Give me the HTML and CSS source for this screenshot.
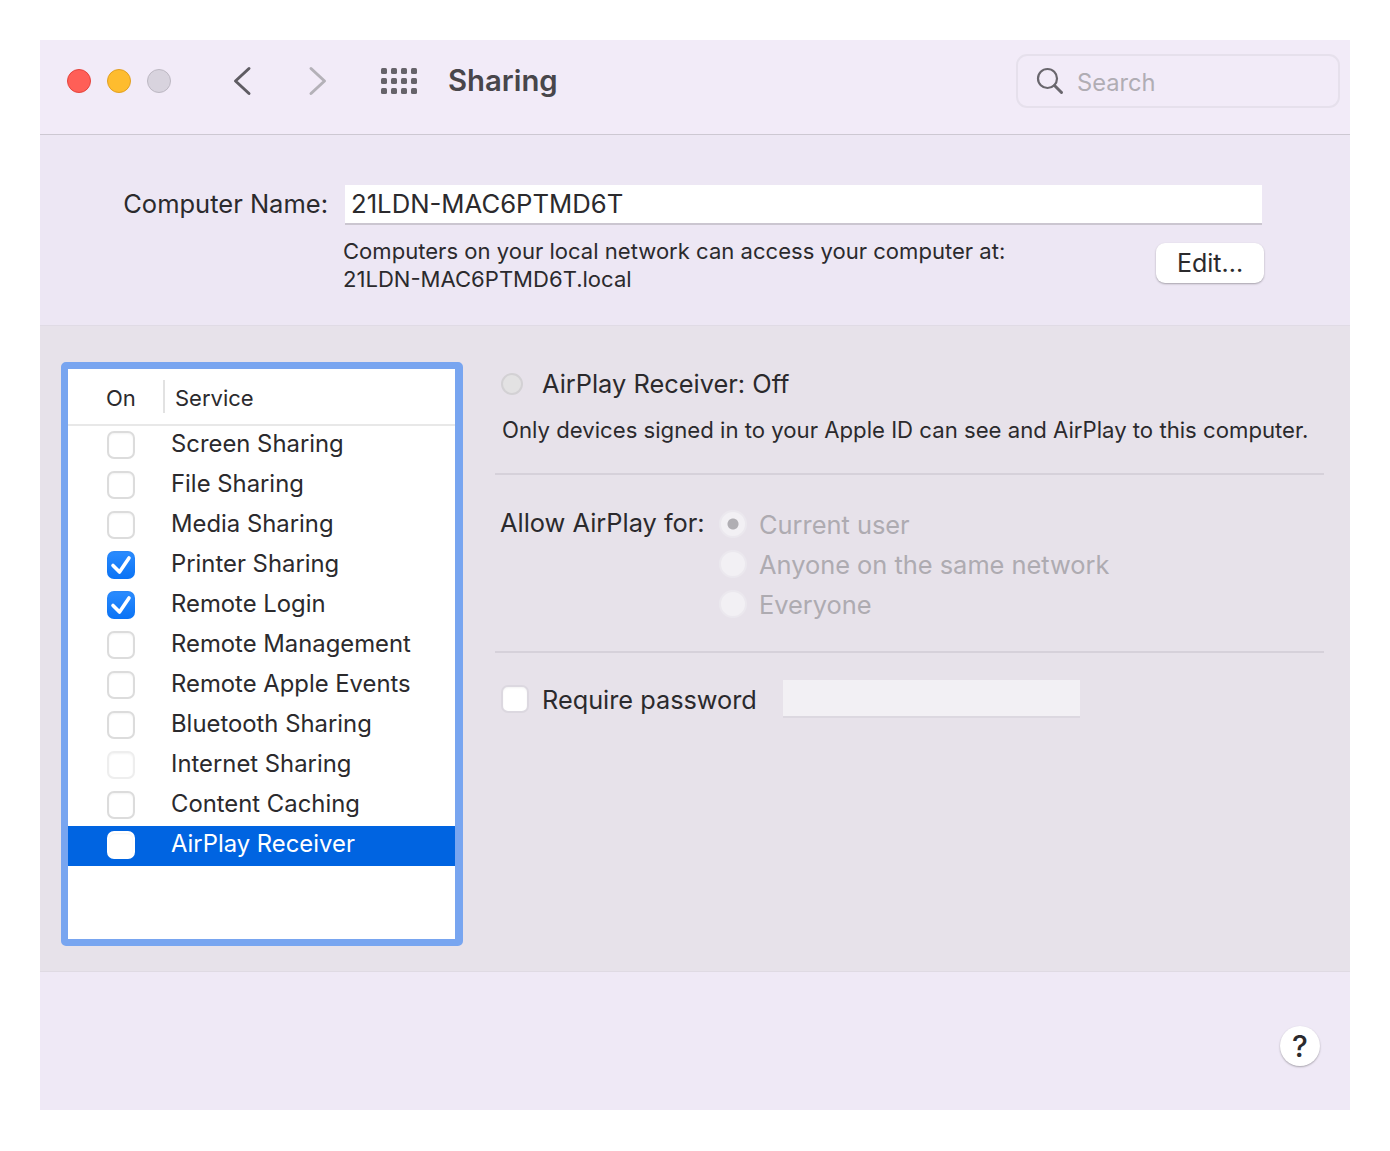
FILE: index.html

```html
<!DOCTYPE html>
<html lang="en">

<head>
    <meta charset="UTF-8">
    <meta name="viewport" content="width=device-width, initial-scale=1.0">
    <title>Sharing</title>
    <link rel="stylesheet" href="styles.css">
</head>

<body>
    <div class="window">
        <header class="toolbar">
            <div class="lights">
                <span class="light light-red"></span>
                <span class="light light-yellow"></span>
                <span class="light light-grey"></span>
            </div>
            <svg class="nav nav-back" width="20" height="30" viewBox="0 0 20 30">
                <path d="M17 2.5 L3.5 15 L17 27.5" fill="none" stroke="#5f5c63" stroke-width="3" stroke-linecap="round" stroke-linejoin="round" />
            </svg>
            <svg class="nav nav-forward" width="20" height="30" viewBox="0 0 20 30">
                <path d="M3 2.5 L16.5 15 L3 27.5" fill="none" stroke="#b4b1b8" stroke-width="3" stroke-linecap="round" stroke-linejoin="round" />
            </svg>
            <svg class="apps" width="38" height="26" viewBox="0 0 38 26" fill="#66636a">
                <rect x="0" y="0" width="6" height="6" rx="1.5" />
                <rect x="10" y="0" width="6" height="6" rx="1.5" />
                <rect x="20" y="0" width="6" height="6" rx="1.5" />
                <rect x="30" y="0" width="6" height="6" rx="1.5" />
                <rect x="0" y="10" width="6" height="6" rx="1.5" />
                <rect x="10" y="10" width="6" height="6" rx="1.5" />
                <rect x="20" y="10" width="6" height="6" rx="1.5" />
                <rect x="30" y="10" width="6" height="6" rx="1.5" />
                <rect x="0" y="20" width="6" height="6" rx="1.5" />
                <rect x="10" y="20" width="6" height="6" rx="1.5" />
                <rect x="20" y="20" width="6" height="6" rx="1.5" />
                <rect x="30" y="20" width="6" height="6" rx="1.5" />
            </svg>
            <h1 class="title">Sharing</h1>
            <div class="search">
                <svg width="28" height="28" viewBox="0 0 28 28">
                    <circle cx="11.5" cy="11.5" r="9.5" fill="none" stroke="#69666d" stroke-width="2.2" />
                    <path d="M18.5 18.5 L25.5 25.5" stroke="#69666d" stroke-width="3" stroke-linecap="round" />
                </svg>
                <span class="search-text">Search</span>
            </div>
        </header>

        <section class="name-section">
            <div class="name-row">
                <label class="name-label">Computer Name:</label>
                <div class="name-field">21LDN-MAC6PTMD6T</div>
            </div>
            <div class="address-row">
                <p class="address">Computers on your local network can access your computer at:<br>21LDN-MAC6PTMD6T.local</p>
                <button class="edit-btn">Edit...</button>
            </div>
        </section>

        <section class="main">
            <div class="list">
                <div class="list-head">
                    <span class="head-on">On</span>
                    <span class="head-service">Service</span>
                </div>
                <div class="row"><span class="box"></span><span class="row-name">Screen Sharing</span></div>
                <div class="row"><span class="box"></span><span class="row-name">File Sharing</span></div>
                <div class="row"><span class="box"></span><span class="row-name">Media Sharing</span></div>
                <div class="row">
                    <span class="box box-on">
                        <svg width="28" height="28" viewBox="0 0 28 28"><path d="M6 14.5 L12.5 21 L22 7" fill="none" stroke="#fff" stroke-width="3.6" stroke-linecap="round" stroke-linejoin="round" /></svg>
                    </span>
                    <span class="row-name">Printer Sharing</span>
                </div>
                <div class="row">
                    <span class="box box-on">
                        <svg width="28" height="28" viewBox="0 0 28 28"><path d="M6 14.5 L12.5 21 L22 7" fill="none" stroke="#fff" stroke-width="3.6" stroke-linecap="round" stroke-linejoin="round" /></svg>
                    </span>
                    <span class="row-name">Remote Login</span>
                </div>
                <div class="row"><span class="box"></span><span class="row-name">Remote Management</span></div>
                <div class="row"><span class="box"></span><span class="row-name">Remote Apple Events</span></div>
                <div class="row"><span class="box"></span><span class="row-name">Bluetooth Sharing</span></div>
                <div class="row"><span class="box box-faint"></span><span class="row-name">Internet Sharing</span></div>
                <div class="row"><span class="box"></span><span class="row-name">Content Caching</span></div>
                <div class="row row-selected"><span class="box box-white"></span><span class="row-name">AirPlay Receiver</span></div>
            </div>

            <div class="pane">
                <div class="status">
                    <span class="status-dot"></span>
                    <span class="status-text">AirPlay Receiver: Off</span>
                </div>
                <p class="desc">Only devices signed in to your Apple ID can see and AirPlay to this computer.</p>

                <div class="allow">
                    <span class="allow-label">Allow AirPlay for:</span>
                    <div class="radios">
                        <div class="radio-row"><span class="radio radio-on"></span><span>Current user</span></div>
                        <div class="radio-row"><span class="radio"></span><span>Anyone on the same network</span></div>
                        <div class="radio-row"><span class="radio"></span><span>Everyone</span></div>
                    </div>
                </div>

                <div class="password">
                    <span class="box box-white box-pass"></span>
                    <span class="password-label">Require password</span>
                    <div class="password-field"></div>
                </div>
            </div>
        </section>

        <footer class="bottom">
            <button class="help">?</button>
        </footer>
    </div>
</body>

</html>
```

FILE: styles.css

```css
body {
    margin: 0;
    background-color: #fff;
    font-family: Inter, "Liberation Sans", sans-serif;
    color: #2b2a2d;
}

.window {
    width: 1310px;
    height: 1070px;
    margin: 40px;
    display: flex;
    flex-direction: column;
    background-color: #efe9f6;
}

/* toolbar */
.toolbar {
    height: 82px;
    flex: none;
    display: flex;
    align-items: center;
    padding: 0 10px 12px 27px;
    background-color: #f2ebf8;
    border-bottom: 1px solid #cdc8d2;
}

.lights {
    display: flex;
    gap: 16px;
    width: 165px;
    flex: none;
}

.light {
    width: 22px;
    height: 22px;
    border-radius: 50%;
    border: 1px solid;
}

.light-red {
    background-color: #ff5f57;
    border-color: #e5443d;
}

.light-yellow {
    background-color: #febc2e;
    border-color: #e2a021;
}

.light-grey {
    background-color: #d8d3de;
    border-color: #bdb8c3;
}

.nav {
    flex: none;
    margin-right: 56px;
}

.nav-forward {
    margin-right: 53px;
}

.apps {
    flex: none;
    margin-right: 29px;
}

.title {
    margin: 0 0 2px;
    font-size: 29.3px;
    font-weight: 600;
    color: #48464b;
}

.search {
    width: 324px;
    height: 54px;
    margin-left: auto;
    display: flex;
    align-items: center;
    gap: 13px;
    padding-left: 18px;
    box-sizing: border-box;
    border: 2px solid #e6e0ec;
    border-radius: 11px;
}

.search-text {
    padding-top: 3px;
    font-size: 23.7px;
    color: #b0adb4;
}

/* computer name */
.name-section {
    height: 140px;
    flex: none;
    padding-top: 50px;
    background-color: #ede7f4;
    border-bottom: 1px solid #e0dbe5;
}

.name-row {
    display: flex;
    align-items: center;
    gap: 17px;
}

.name-label {
    width: 288px;
    padding-bottom: 3px;
    text-align: right;
    font-size: 25.5px;
}

.name-field {
    width: 911px;
    height: 38px;
    line-height: 37px;
    padding-left: 6px;
    background-color: #fff;
    border-bottom: 2px solid #cbc6d0;
    font-size: 25.7px;
}

.address-row {
    display: flex;
    justify-content: space-between;
    padding: 12px 86px 0 303px;
}

.address {
    margin: 0;
    font-size: 22.07px;
    line-height: 28px;
}

.edit-btn {
    width: 108px;
    height: 40px;
    margin-top: 6px;
    padding: 0;
    font-family: inherit;
    font-size: 25px;
    color: #2b2a2d;
    background-color: #fff;
    border: none;
    border-radius: 9px;
    box-shadow: 0 1px 2px rgba(0, 0, 0, 0.3);
}

/* main area */
.main {
    flex: none;
    height: 646px;
    display: flex;
    gap: 32px;
    box-sizing: border-box;
    padding: 36px 26px 25px 21px;
    background-color: #e7e2ea;
    border-bottom: 1px solid #dfdae3;
}

.list {
    width: 387px;
    flex: none;
    background-color: #fff;
    border-style: solid;
    border-color: #78a5f0;
    border-width: 7px 8px 7px 7px;
    border-radius: 5px;
}

.list-head {
    height: 55px;
    display: flex;
    align-items: center;
    border-bottom: 2px solid #e8e8e8;
    font-size: 22px;
}

.head-on {
    width: 97px;
    padding-left: 38px;
    box-sizing: border-box;
    height: 33px;
    line-height: 36px;
    border-right: 2px solid #e2e2e2;
}

.head-service {
    padding-left: 10px;
    margin-top: 2px;
}

.row {
    height: 40px;
    display: flex;
    font-size: 23.85px;
}

.row-name {
    line-height: 35px;
    margin-left: 36px;
}

.row-selected {
    background-color: #0064e1;
    color: #fff;
}

.box {
    width: 28px;
    height: 28px;
    flex: none;
    margin: 5px 0 0 39px;
    box-sizing: border-box;
    background-color: #fff;
    border: 2px solid #dcdcdc;
    border-radius: 7px;
    box-shadow: inset 0 1px 2px rgba(0, 0, 0, 0.05);
}

.box-on {
    background: linear-gradient(#2b8cff, #0a73f5);
    border: none;
}

.box-on svg {
    display: block;
}

.box-faint {
    border-color: #eee;
}

.box-white {
    border-color: #dcd8e0;
}

.row-selected .box-white {
    border-color: #fff;
}

/* right pane */
.pane {
    flex: 1;
}

.status {
    display: flex;
    align-items: center;
    height: 44px;
    margin-left: 6px;
}

.status-dot {
    width: 22px;
    height: 22px;
    box-sizing: border-box;
    background-color: #e3e2e3;
    border: 2px solid #d3d1d4;
    border-radius: 50%;
}

.status-text {
    margin: 0 0 2px 19px;
    font-size: 25.4px;
}

.desc {
    margin: 0;
    padding: 9px 0 28px 7px;
    font-size: 22.17px;
    line-height: 30px;
    white-space: nowrap;
    border-bottom: 2px solid #d6d1da;
}

.allow {
    display: flex;
    height: 178px;
    box-sizing: border-box;
    padding: 29px 0 0 5px;
    border-bottom: 2px solid #d6d1da;
}

.allow-label {
    width: 218px;
    margin-top: -1px;
    padding-right: 1px;
    font-size: 25.4px;
    line-height: 40px;
}

.radios {
    color: #aeabb1;
    font-size: 25.4px;
}

.radio-row {
    height: 40px;
    display: flex;
    align-items: center;
    gap: 12px;
}

.radio {
    width: 28px;
    height: 28px;
    box-sizing: border-box;
    background-color: #f2f0f4;
    border: 2px solid #ebe8ee;
    border-radius: 50%;
}

.radio-on {
    background: radial-gradient(circle, #b0aeb3 0 5px, #f2f0f4 6px);
}

.password {
    display: flex;
    align-items: center;
    height: 38px;
    margin-top: 27px;
}

.box-pass {
    margin: 0 0 0 6px;
}

.password-label {
    margin-left: 13px;
    font-size: 25.3px;
}

.password-field {
    width: 297px;
    height: 38px;
    margin-left: 26px;
    box-sizing: border-box;
    background-color: #f2f0f4;
    border-bottom: 2px solid #dcd8e0;
}

/* footer */
.bottom {
    flex: 1;
    display: flex;
    justify-content: flex-end;
    padding: 54px 30px 0 0;
    background-color: #efe9f6;
}

.help {
    width: 40px;
    height: 40px;
    padding: 0;
    font-family: inherit;
    font-size: 30px;
    font-weight: 500;
    color: #2b2a2d;
    background-color: #fff;
    border: none;
    border-radius: 50%;
    box-shadow: 0 1px 2px rgba(0, 0, 0, 0.3);
}
```
